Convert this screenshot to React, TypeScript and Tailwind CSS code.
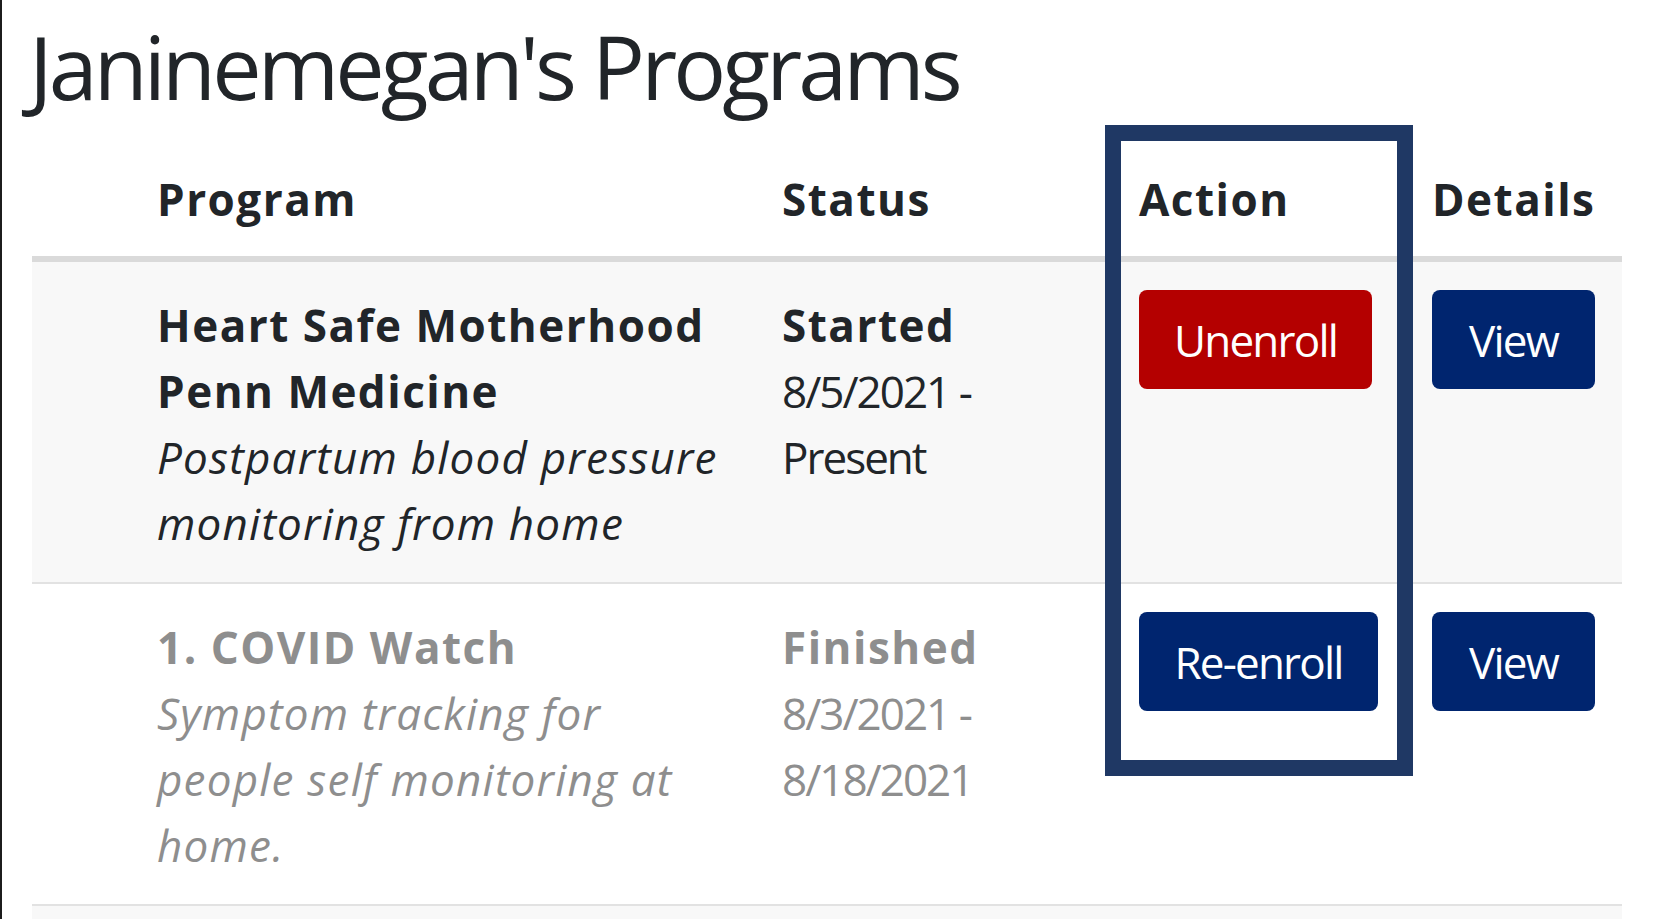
import type { ReactNode } from 'react';

type Row = {
  title: ReactNode;
  desc: string[];
  status: string;
  dates: string[];
  action: { label: string; tone: 'red' | 'navy'; width: string };
  muted?: boolean;
  striped?: boolean;
};

const ROWS: Row[] = [
  {
    title: (
      <>
        Heart Safe Motherhood
        <br />
        Penn Medicine
      </>
    ),
    desc: ['Postpartum blood pressure', 'monitoring from home'],
    status: 'Started',
    dates: ['8/5/2021 -', 'Present'],
    action: { label: 'Unenroll', tone: 'red', width: 'w-[233px]' },
    striped: true,
  },
  {
    title: '1. COVID Watch',
    desc: ['Symptom tracking for', 'people self monitoring at', 'home.'],
    status: 'Finished',
    dates: ['8/3/2021 -', '8/18/2021'],
    action: { label: 'Re-enroll', tone: 'navy', width: 'w-[239px]' },
    muted: true,
  },
];

const GRID = 'grid grid-cols-[125px_625px_357px_293px_1fr]';

function Btn({ label, tone, width }: { label: string; tone: 'red' | 'navy'; width: string }) {
  return (
    <button
      type="button"
      className={`flex h-[99px] items-center justify-center rounded-[8px] text-[44px] leading-[66px] tracking-[-1.8px] text-white ${width} ${
        tone === 'red' ? 'bg-[#b40000]' : 'bg-[#00256f]'
      }`}
    >
      {label}
    </button>
  );
}

export default function App() {
  return (
    <div
      className="relative h-[919px] overflow-hidden border-l-2 border-[#1c1c1c] bg-white text-[#212529]"
      style={{ fontFamily: '"Open Sans", "Noto Sans", sans-serif' }}
    >
      <h1 className="pl-[27px] pt-[13px] text-[88px] font-normal leading-[106px] tracking-[-3.9px]">
        Janinemegan's Programs
      </h1>

      <div className="ml-[30px] w-[1590px]">
        <div className={`${GRID} border-b-[6px] border-[#dadada] text-[44px] font-bold leading-[66px] tracking-[1.5px]`}>
          <div />
          <div className="pb-[24px] pt-[47px]">Program</div>
          <div className="pb-[24px] pt-[47px]">Status</div>
          <div className="pb-[24px] pt-[47px]">Action</div>
          <div className="pb-[24px] pt-[47px]">Details</div>
        </div>

        {ROWS.map((r, i) => (
          <div
            key={i}
            className={`${GRID} border-b-2 border-[#e2e2e2] text-[44px] leading-[66px] ${
              r.striped ? 'bg-[#f8f8f8]' : 'bg-white'
            } ${r.muted ? 'text-[#8e8e8e]' : ''}`}
          >
            <div />
            <div className="pb-[26px] pt-[30px]">
              <p className="font-bold tracking-[1.5px]">{r.title}</p>
              <p className="italic tracking-[1.2px]">
                {r.desc.map((d, j) => (
                  <span key={j} className="block">
                    {d}
                  </span>
                ))}
              </p>
            </div>
            <div className="pb-[26px] pt-[30px]">
              <p className="font-bold tracking-[1.5px]">{r.status}</p>
              {r.dates.map((d, j) => (
                <p key={j} className="tracking-[-2px]">
                  {d}
                </p>
              ))}
            </div>
            <div className="pt-[28px]">
              <Btn {...r.action} />
            </div>
            <div className="pt-[28px]">
              <Btn label="View" tone="navy" width="w-[163px]" />
            </div>
          </div>
        ))}

        <div className="h-[60px] bg-[#f8f8f8]" />
      </div>

      {/* highlight frame around the Action column */}
      <div className="pointer-events-none absolute left-[1103px] top-[125px] h-[651px] w-[308px] border-[16px] border-[#1f3864]" />
    </div>
  );
}
